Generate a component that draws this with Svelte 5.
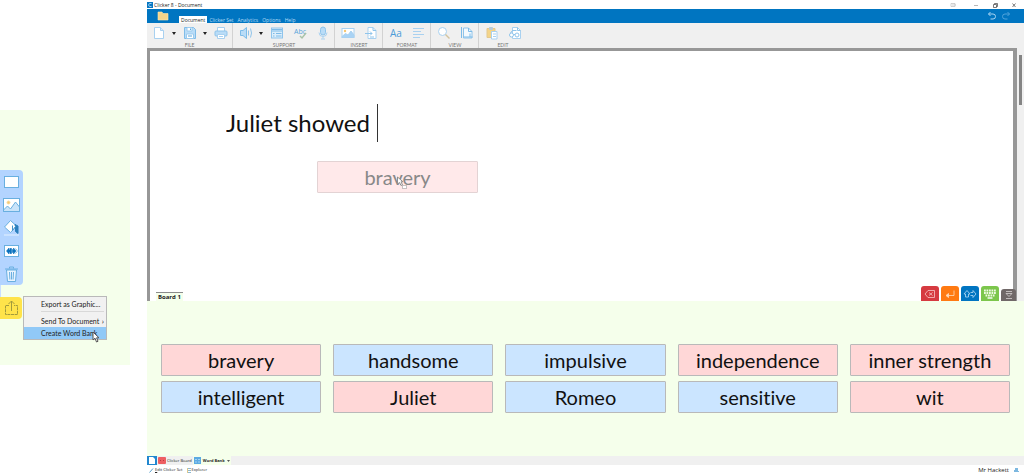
<script lang="ts">
	type Word = { text: string; tone: 'pink' | 'blue' };

	const words: Word[] = [
		{ text: 'bravery', tone: 'pink' },
		{ text: 'handsome', tone: 'blue' },
		{ text: 'impulsive', tone: 'blue' },
		{ text: 'independence', tone: 'pink' },
		{ text: 'inner strength', tone: 'pink' },
		{ text: 'intelligent', tone: 'blue' },
		{ text: 'Juliet', tone: 'pink' },
		{ text: 'Romeo', tone: 'blue' },
		{ text: 'sensitive', tone: 'blue' },
		{ text: 'wit', tone: 'pink' }
	];

	const groups = [
		{ label: 'FILE', items: ['new', 'arrow', 'save', 'arrow', 'print'] },
		{ label: 'SUPPORT', items: ['speaker', 'arrow', 'predict', 'spell', 'mic'] },
		{ label: 'INSERT', items: ['picture', 'import'] },
		{ label: 'FORMAT', items: ['font', 'align'] },
		{ label: 'VIEW', items: ['zoom', 'page'] },
		{ label: 'EDIT', items: ['paste', 'find'] }
	];

	const menus = ['Document', 'Clicker Set', 'Analytics', 'Options', 'Help'];
	const cellTools = ['rect', 'image', 'fill', 'resize', 'bin'];
	const boardTools = ['delete', 'enter', 'jump', 'keyboard', 'collapse'];

	let text = $state('Juliet showed');
</script>

{#snippet toolIcon(name: string)}
	<svg width="14" height="14" viewBox="0 0 14 14" fill="none" stroke="#a9d1f0" stroke-width="1">
		{#if name === 'new'}
			<path d="M2.500 1.500h6l3 3v8h-9z" fill="#fff" />
			<path d="M8.500 1.500v3h3" fill="#d9ecfb" />
		{:else if name === 'save'}
			<path d="M1.500 1.500h9l2 2v9h-11z" fill="#b9dcf7" stroke="#7fbce8" />
			<path d="M4 1.500h5v3.500H4zM3.500 8h7v4.500h-7z" fill="#fff" stroke="#9ccbee" />
			<path d="M7.500 2.500v1.500M5 10h4" stroke="#5aa7de" />
		{:else if name === 'print'}
			<path d="M3.500 5V1.500h7V5" fill="#fff" />
			<rect x="1" y="5" width="12" height="5" rx="1" fill="#b9dcf7" stroke="#8fc4eb" />
			<path d="M3.500 8.500h7v4h-7zM5 10.500h4" fill="#fff" />
		{:else if name === 'speaker'}
			<path d="M1.500 4.500h2.500L7.500 1.500v11L4 9.500H1.500z" fill="#b9dcf7" stroke="#7dbbe8" />
			<path d="M9.500 4.500v5M11.500 2.500l1 4.500-1 4.500" stroke="#8fc4eb" />
		{:else if name === 'predict'}
			<rect x="1.500" y="2" width="11" height="10" fill="#dceefb" stroke="#8fc4eb" />
			<path d="M2 3.500h10M2 5h10" stroke="#7dbbe8" />
			<path d="M6 7.500h5.500M6 10h5.500M3 7.500h1.500M3 10h1.500" stroke="#7dbbe8" />
		{:else if name === 'spell'}
			<text x="1" y="8" font-size="7" fill="#5aa5dc" stroke="none">Abc</text>
			<path d="M7 10l2 2 4-5" stroke="#a9c3a8" stroke-width="1.500" />
		{:else if name === 'mic'}
			<rect x="4.500" y="1" width="5" height="8" rx="2.500" fill="#b9dcf7" stroke="#8fc4eb" />
			<path d="M3 6.500q0 4 4 4t4-4M7 10.500v2M5 13h4" />
		{:else if name === 'picture'}
			<rect x="1" y="2.500" width="12" height="9" fill="#fff" />
			<path d="M1 10.500l3.500-3 2.500 1.500 3-4 3 4v2.500H1z" fill="#a9d3f5" />
			<circle cx="4" cy="5" r="1.200" fill="#f7c66f" stroke="none" />
		{:else if name === 'import'}
			<path d="M4 1.500h5l3 3v8H4z" fill="#fff" />
			<path d="M9 1.500v3h3M1 7.500h7M6 5.500l2 2-2 2M6 11h4" stroke="#8fc4eb" />
		{:else if name === 'font'}
			<text x="1" y="11" font-size="10" fill="#4a9bd8" stroke="none">Aa</text>
		{:else if name === 'align'}
			<path d="M1 2.500h11M1 5.500h8M1 8.500h11M1 11.500h7" />
		{:else if name === 'zoom'}
			<circle cx="5.500" cy="5.500" r="4" fill="#fff" />
			<path d="M8.500 8.500l4 4" stroke="#d3c49f" stroke-width="1.500" />
		{:else if name === 'page'}
			<path d="M3.500 2h5l3.500 3.500V12H3.500z" fill="#f3f9fe" stroke="#8fc4eb" />
			<path d="M1.500 1v11M3.500 11h9M8.500 2v3.500H12M10 7.500V11" stroke="#7dbbe8" />
		{:else if name === 'paste'}
			<path d="M2 2.500h8v9H2z" fill="#f4d488" stroke="#e3c88e" />
			<path d="M4.500 1.500h3v2h-3z" fill="#b9ccd8" stroke="#b9ccd8" />
			<path d="M6.500 5.500h5.500v7.500H6.500zM8 8h3M8 10.500h3" fill="#fff" />
		{:else if name === 'find'}
			<path d="M4.500 1.500h5l3 3v8h-8z" fill="#fff" />
			<circle cx="3.500" cy="9" r="2" fill="#fff" stroke="#8fc4eb" />
			<circle cx="9" cy="9" r="2" fill="#fff" stroke="#8fc4eb" />
			<path d="M5.500 8.500h1.500M2.500 7l2-2.500h4M9.500 1.500v3h3" stroke="#8fc4eb" />
		{/if}
	</svg>
{/snippet}

{#snippet cellIcon(name: string)}
	<svg width="18" height="18" viewBox="0 0 18 18" fill="#fff" stroke="#69afe0">
		{#if name === 'rect'}
			<rect x="1.500" y="3.500" width="14" height="11" />
		{:else if name === 'image'}
			<rect x=".5" y="2.500" width="16" height="13" />
			<path d="M.5 14l4-4 3 3 5-7 4 5v4.500H.5z" fill="#c9e3f9" />
			<circle cx="5.500" cy="6.500" r="1.500" fill="#f7c66f" stroke="#f5dba2" />
		{:else if name === 'fill'}
			<path d="M7.500 1.500l6 5.500-6 6.500L1.500 8z" />
			<path d="M12 5.500l3 1.500v7.500l-2.500-2V8z" fill="#2a7fbd" stroke="#2a7fbd" />
			<path d="M9.500 6.500v5l3-4" stroke="#4694ca" />
			<path d="M1 16h15" stroke="#e4f1ff" />
		{:else if name === 'resize'}
			<rect x="1.500" y="3.500" width="14" height="11" />
			<path d="M3.500 9L6 6v2h1V6.500h1.500v5H7V10H6v2z" fill="#0a71bd" stroke="#0a71bd" stroke-width=".6" />
			<path d="M9.500 7.500h1V6l2.500 3-2.500 3v-1.500h-1z" fill="#0a71bd" stroke="#0a71bd" stroke-width=".6" />
			<path d="M12.500 6.500L14.500 9l-2 2.500" fill="none" stroke-width=".8" />
		{:else if name === 'bin'}
			<path d="M3.500 5h10l-1 11.500h-8z" fill="#eaf4ff" />
			<path d="M2 4h13M6.500 3.500V2h4v1.500M6.500 7l.4 7.500M8.500 7v7.500M10.500 7l-.4 7.500" fill="none" />
		{/if}
	</svg>
{/snippet}

<div class="screen">
	<aside class="side">
		<div class="cell-tools">
			{#each cellTools as name}
				<button aria-label={name}>{@render cellIcon(name)}</button>
			{/each}
		</div>
		<div class="share-row">
			<button class="share" aria-label="Share">
				<svg width="18" height="18" viewBox="0 0 18 18" fill="none" stroke="#a39b3c">
					<path d="M7 6.500H3.500v9h12v-9H12" stroke-dasharray="3 .6" />
					<path d="M9.500 12V2M6.500 5l3-3 3 3" />
				</svg>
			</button>
			<div class="popup">
				<button>Export as Graphic...</button>
				<hr />
				<button>Send To Document <span class="more">›</span></button>
				<button class="active">Create Word Bank</button>
				<svg class="pointer" width="8" height="12" viewBox="0 0 8 12" fill="#fff" stroke="#555">
					<path d="M1 1v8l2-1.800L4.500 11l1.500-.7L4.600 6.800H7z" />
				</svg>
			</div>
		</div>
	</aside>

	<main class="app">
		<header class="titlebar">
			<svg width="6" height="6" viewBox="0 0 6 6">
				<path d="M0 0h6v6H0z" fill="#0877c2" />
				<path d="M4.500 1.500h-2l-1 1.500 1 1.500h2" fill="none" stroke="#9bd0f2" />
			</svg>
			<span>Clicker 8 - Document</span>
			<div class="window-buttons">
				<button aria-label="Layout">
					<svg width="8" height="8" viewBox="0 0 8 8"><path d="M1 2.500h4v3H1zM2 4h4" stroke="#bbb" /></svg>
				</button>
				<button class="wide" aria-label="Minimise">
					<svg width="8" height="8" viewBox="0 0 8 8"><path d="M2 4.500h4" /></svg>
				</button>
				<button aria-label="Restore">
					<svg width="8" height="8" viewBox="0 0 8 8"><path d="M2.500 3.500h3v3h-3zM3.500 3.500v-1h3v3h-1" stroke="#444" /></svg>
				</button>
				<button aria-label="Close">
					<svg width="8" height="8" viewBox="0 0 8 8"><path d="M2.500 2.500l3 3.500M5.500 2.500l-3 3.500" stroke="#444" /></svg>
				</button>
			</div>
		</header>

		<nav class="menubar">
			<button class="folder" aria-label="Files">
				<svg width="12" height="10" viewBox="0 0 12 10">
					<path d="M1 9V1h4l1 1.500h5V9z" fill="#f5d58a" stroke="#ffe9b0" stroke-width=".6" />
				</svg>
			</button>
			{#each menus as item, i}
				<button class="menu" class:selected={i === 0}>{item}</button>
			{/each}
			<div class="history">
				<button aria-label="Undo">
					<svg width="10" height="10" viewBox="0 0 10 10" stroke="#a8d4f2">
						<path d="M3.500 1L1.500 3l2 2M1.500 3H6q2.500 0 2.500 2.500T6 8H3.500" />
					</svg>
				</button>
				<button aria-label="Redo">
					<svg width="10" height="10" viewBox="0 0 10 10" stroke="#4fa3db">
						<path d="M6.500 1l2 2-2 2M8.500 3H4Q1.500 3 1.500 5.500T4 8h2.500" />
					</svg>
				</button>
			</div>
		</nav>

		<div class="toolbar">
			{#each groups as group}
				<div class="group" class:padded={group.label !== 'FILE'}>
					<div class="tools">
						{#each group.items as name}
							{#if name === 'arrow'}
								<button class="drop" aria-label="More">
									<svg width="4" height="3" viewBox="0 0 4 3"><path d="M0 0h4L2 3z" fill="#222" /></svg>
								</button>
							{:else}
								<button class="tool" aria-label={name}>{@render toolIcon(name)}</button>
							{/if}
						{/each}
					</div>
					<span class="group-label">{group.label}</span>
				</div>
			{/each}
		</div>

		<section class="document">
			<div class="paper">
				<div class="line">
					<input aria-label="Document text" bind:value={text} />
					<span class="caret"></span>
				</div>
				<div class="dragged">
					bravery
					<svg class="drag-pointer" width="12" height="14" viewBox="0 0 12 14" fill="#fff" stroke="#8f8f8f">
						<path d="M1.500 1v7l2-1.500 1.500 3 1.500-.7-1.500-3H7z" />
						<path d="M6.500 9.500h4v3h-4z" stroke-dasharray="1 1" />
					</svg>
				</div>
				<div class="paper-footer">
					<button class="board-tab">Board 1</button>
					<div class="board-tools">
						{#each boardTools as name}
							<button class={name} aria-label={name}>
								<svg width="14" height="12" viewBox="0 0 14 12" fill="none" stroke="#fff" stroke-width=".8">
									{#if name === 'delete'}
										<path d="M2 6l3-3.500h6.500v7H5zM6 4.500l3.500 3M9.500 4.500L6 7.500" stroke="#f6c5c5" />
									{:else if name === 'enter'}
										<path d="M11 2.500v5H5.500" stroke="#ffdcbb" />
										<path d="M5.500 5.500L3 7.500l2.500 2z" stroke="#ffdcbb" fill="#ffdcbb" />
									{:else if name === 'jump'}
										<path d="M4 2.500L1 6h1.500v3h3V6H7z" stroke="#b6dcf5" />
										<path d="M7.500 4.500H10v-2L13 6l-3 3.500v-2H7.500" stroke="#b6dcf5" />
									{:else if name === 'keyboard'}
										<path d="M1 2.500h12M1 5h12M2.500 7.500h9" stroke="#eef9e2" stroke-width="1.800" stroke-dasharray="1.800 .7" />
										<path d="M4.500 10h5" stroke="#fff" stroke-width="1.400" />
									{:else}
										<path d="M4 2.500h6M4 4.500h6L7 7.500zM4 9.500h6" stroke="#d5d0d0" />
									{/if}
								</svg>
							</button>
						{/each}
					</div>
				</div>
			</div>
			<div class="scrollbar"><div class="thumb"></div></div>
		</section>

		<section class="board">
			{#each words as word}
				<button class="word {word.tone}">{word.text}</button>
			{/each}
		</section>

		<div class="set-tabs">
			<button class="home" aria-label="Home">
				<svg width="6" height="7" viewBox="0 0 6 7"><path d="M0 0h4l2 2v5H0z" fill="#fff" /></svg>
			</button>
			<button class="set-tab">
				<svg width="8" height="7" viewBox="0 0 8 7">
					<rect width="8" height="7" rx="1" fill="#ee5f62" />
					<path d="M2 3.500h1M5 3.500h1" stroke="#b53c40" />
				</svg>
				Clicker Board
			</button>
			<button class="set-tab current">
				<svg width="7" height="7" viewBox="0 0 7 7">
					<path d="M0 0h7v7H0z" fill="#5caae2" />
					<path d="M1 2.500h2M4 2.500h2M1 5h2M4 5h2" stroke="#a4d3f3" />
				</svg>
				Word Bank
				<svg width="3" height="2" viewBox="0 0 3 2"><path d="M0 0h3L1.500 2z" fill="#555" /></svg>
			</button>
		</div>

		<footer class="status">
			<button>
				<svg width="5" height="5" viewBox="0 0 5 5"><path d="M.5 4.500l3.500-4" stroke="#5aa0cc" /></svg>
				<u>E</u>dit Clicker Set
			</button>
			<button>
				<svg width="4" height="5" viewBox="0 0 4 5">
					<path d="M0 .5h4M0 2.500h4M0 4.500h4" stroke="#8fb8d0" />
					<path d="M0 0h1v5H0z" fill="#e0c98a" />
				</svg>
				Explorer
			</button>
			<span class="user">Mr Hackett</span>
			<svg width="6" height="6" viewBox="0 0 6 6"><path d="M2 1h3v3h1v1H1V3h1z" fill="#7db8e0" /></svg>
		</footer>
	</main>
</div>

<style>
	:global(body) {
		background: #fff;
	}

	.screen {
		display: flex;
		gap: 17px;
		font-family: 'Open Sans', 'Noto Sans', sans-serif;
		font-size: 5px;
		line-height: 8px;
		font-variant-ligatures: none;
		color: #222;
	}

	button {
		display: flex;
		align-items: center;
		justify-content: center;
		margin: 0;
		padding: 0;
		border: 0;
		background: none;
		font: inherit;
		font-variant-ligatures: none;
		color: inherit;
		white-space: nowrap;
	}

	svg {
		display: block;
		flex: none;
	}

	.side {
		flex: 0 0 130px;
		align-self: flex-start;
		margin-top: 110px;
		padding: 60px 0 46px;
		background: #f5ffeb;
		box-sizing: border-box;
	}

	.cell-tools {
		width: 23px;
		border-radius: 0 4px 4px 0;
		background: #b3d4ff;
	}

	.cell-tools button {
		width: 23px;
		height: 23px;
	}

	.share-row {
		position: relative;
		padding-top: 12px;
		border-left: 1px solid #c9dfff;
	}

	.share {
		width: 22px;
		height: 22px;
		margin-left: -1px;
		border-radius: 0 4px 4px 0;
		background: #ffe34a;
	}

	.popup {
		position: absolute;
		top: 11px;
		left: 22px;
		width: 84px;
		border: 1px solid #b9b9b9;
		background: #f1f1f1;
		box-sizing: border-box;
		font-family: Lato, sans-serif;
		font-size: 7px;
	}

	.popup button {
		width: 100%;
		height: 13px;
		padding: 0 2px 0 17px;
		justify-content: space-between;
	}

	.popup hr {
		margin: 1px 2px 2px 17px;
		border: 0;
		border-top: 1px solid #d8d8d8;
	}

	.popup .active {
		height: 12px;
		background: #91c9f7;
	}

	.more {
		font-size: 8px;
	}

	.pointer {
		position: absolute;
		right: 6px;
		bottom: -4px;
	}

	.app {
		flex: 1;
		min-width: 0;
	}

	.titlebar {
		display: flex;
		align-items: center;
		gap: 1px;
		height: 9px;
	}

	.window-buttons {
		display: flex;
		gap: 11px;
		margin-left: auto;
		padding-right: 6px;
	}

	.window-buttons svg {
		fill: none;
		stroke: #999;
		stroke-width: 0.7;
	}

	.window-buttons .wide {
		padding: 0 0 0 3px;
	}

	.menubar {
		display: flex;
		align-items: flex-end;
		height: 14px;
		background: #0075c1;
		color: #b5dcf6;
	}

	.folder {
		width: 32px;
		height: 14px;
	}

	.menu {
		height: 7px;
		padding: 0 2px;
	}

	.menu.selected {
		background: #fff;
		color: #222;
	}

	.history {
		display: flex;
		gap: 4px;
		margin-left: auto;
		padding: 0 13px 2px 0;
	}

	.history svg {
		fill: none;
	}

	.toolbar {
		display: flex;
		height: 25px;
		background: #f0f0f0;
	}

	.group {
		border-right: 1px solid #d2d2d2;
		text-align: center;
		color: #777;
	}

	.group:last-child {
		border: 0;
	}

	.group.padded {
		padding-left: 1px;
	}

	.tools {
		display: flex;
		height: 20px;
	}

	.tool {
		width: 23px;
	}

	.drop {
		width: 8px;
	}

	.group-label {
		display: block;
		font-family: Lato, sans-serif;
		font-size: 5px;
		line-height: 5px;
	}

	.document {
		display: flex;
		height: 253px;
		background: #f0f0f0;
	}

	.paper {
		position: relative;
		display: flex;
		flex: 1;
		flex-direction: column;
		border: solid #979797;
		border-width: 3px 4px 0 3px;
		background: #fff;
	}

	.scrollbar {
		width: 3px;
		padding: 7px 2px;
	}

	.thumb {
		height: 50px;
		background: #858585;
	}

	.line {
		display: flex;
		align-items: center;
		margin: 53px 0 0 76px;
	}

	.line input {
		width: 151px;
		padding: 0;
		border: 0;
		outline: 0;
		font-family: Lato, sans-serif;
		font-size: 24px;
		line-height: 38px;
		color: #111;
	}

	.caret {
		width: 1px;
		height: 38px;
		background: #333;
	}

	.dragged {
		position: absolute;
		top: 110px;
		left: 167px;
		width: 161px;
		border: 1px solid #e3d3d4;
		border-radius: 1px;
		box-sizing: border-box;
		background: #ffe9ea;
		font-family: Lato, sans-serif;
		font-size: 20px;
		line-height: 30px;
		text-align: center;
		color: #888;
	}

	.drag-pointer {
		position: absolute;
		top: 14px;
		left: 78px;
	}

	.paper-footer {
		display: flex;
		align-items: flex-end;
		justify-content: space-between;
		margin-top: auto;
		padding-left: 6px;
	}

	.board-tab {
		height: 9px;
		padding: 0 2px;
		border-top: 1px solid #8b8b8b;
		background: #f5ffeb;
		font-size: 6px;
		font-weight: 700;
	}

	.board-tools {
		display: flex;
		align-items: flex-end;
		gap: 2px;
		margin-right: -3px;
		position: relative;
	}

	.board-tools button {
		width: 18px;
		height: 15px;
		border-radius: 3px 3px 0 0;
	}

	.delete {
		background: #d63a40;
	}

	.enter {
		background: #ff7a12;
	}

	.jump {
		background: #0075c1;
	}

	.keyboard {
		background: #7cc64c;
	}

	.board-tools .collapse {
		width: 15px;
		height: 12px;
		background: #706868;
	}

	.board {
		display: grid;
		grid-template-columns: repeat(5, 1fr);
		gap: 5px 12px;
		padding: 43px 14px;
		background: #f5ffeb;
	}

	.word {
		height: 32px;
		border: 1px solid #b9b9b9;
		border-radius: 1px;
		font-family: Lato, sans-serif;
		font-size: 20px;
		color: #111;
	}

	.pink {
		background: #ffd7d7;
	}

	.blue {
		background: #cbe5ff;
	}

	.set-tabs {
		display: flex;
		height: 9px;
		background: #f0f0f0;
	}

	.home {
		width: 10px;
		background: #2187cf;
	}

	.set-tab {
		gap: 1px;
		padding: 0 1px;
		font-size: 4px;
	}

	.current {
		gap: 2px;
		background: #f5ffeb;
		font-weight: 700;
	}

	.status {
		display: flex;
		align-items: center;
		gap: 4px;
		height: 10px;
		padding: 0 5px 0 2px;
	}

	.status button {
		font-size: 4px;
	}

	.status button svg {
		margin-right: 1px;
	}

	.user {
		margin-left: auto;
		font-size: 6px;
	}
</style>
